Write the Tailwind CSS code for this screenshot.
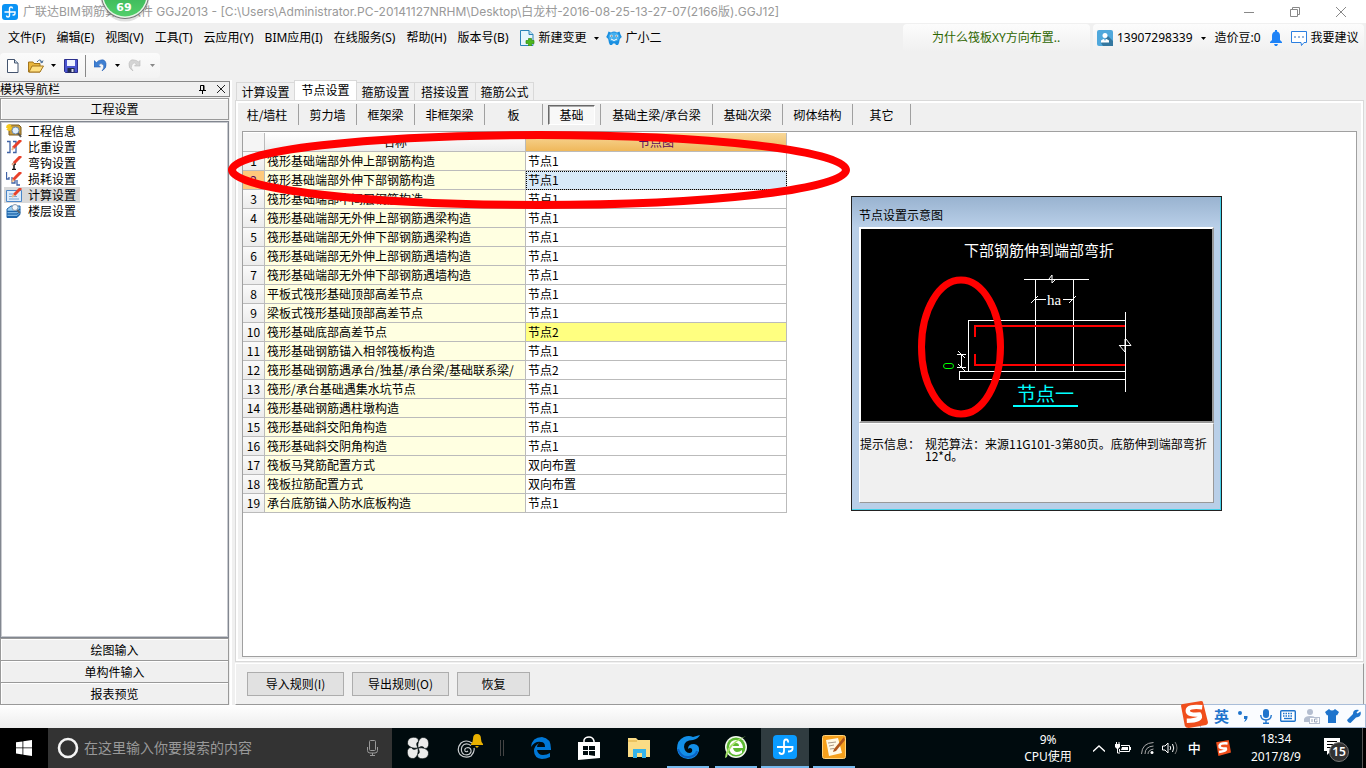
<!DOCTYPE html>
<html lang="zh-CN">
<head>
<meta charset="utf-8">
<meta name="viewport" content="width=device-width, initial-scale=1">
<title>广联达BIM钢筋算量软件 GGJ2013</title>
<script src="https://cdn.jsdelivr.net/npm/@tailwindcss/browser@4"></script>
</head>
<body class="relative flex h-screen min-h-[600px] flex-col overflow-hidden bg-[#f0f0f0] font-['Noto_Sans_CJK_SC',sans-serif] text-xs leading-[18px] text-black">

<!-- Title bar -->
<header class="flex h-[23px] shrink-0 items-center bg-white pl-0.5 font-['Inter','Noto_Sans_CJK_SC',sans-serif] text-[#999]">
  <svg class="size-4" viewBox="0 0 16 16"><rect width="16" height="16" rx="3" fill="#0a93f5"/><path d="M10.500 4.500Q10.500 3 9 3Q7.500 3 7.500 5V11Q7.500 13 6 13Q4.500 13 4.500 11.500M2.500 8H13V9.500Q13 11 11.500 11H10.500" fill="none" stroke="#fff" stroke-width="1.400"/></svg>
  <h1 class="ml-[5px] flex-1 truncate">广联达BIM钢筋算量软件 GGJ2013 - [C:\Users\Administrator.PC-20141127NRHM\Desktop\白龙村-2016-08-25-13-27-07(2166版).GGJ12]</h1>
  <div class="flex h-full items-center gap-9 pr-5">
    <button aria-label="最小化"><svg class="size-[10px]" viewBox="0 0 10 10"><path d="M0 5.500H10" stroke="#888"/></svg></button>
    <button aria-label="还原"><svg class="size-[10px]" viewBox="0 0 10 10" fill="none" stroke="#888"><path d="M.5 2.500H7.500V9.500H.5ZM2.500 2.500V.5H9.500V7.500H7.500"/></svg></button>
    <button aria-label="关闭"><svg class="size-[10px]" viewBox="0 0 10 10"><path d="M0 0L10 10M10 0L0 10" stroke="#888"/></svg></button>
  </div>
</header>

<!-- Menu bar -->
<div class="flex h-[30px] shrink-0 items-center font-['Noto_Sans','Noto_Sans_CJK_SC',sans-serif]">
  <nav class="flex gap-[11px] whitespace-nowrap pl-2">
    <button>文件(F)</button><button>编辑(E)</button><button>视图(V)</button><button>工具(T)</button><button>云应用(Y)</button><button>BIM应用(I)</button><button>在线服务(S)</button><button>帮助(H)</button><button>版本号(B)</button>
  </nav>
  <button class="ml-[11px] flex items-center whitespace-nowrap">
    <svg class="h-4 w-[15px]" viewBox="0 0 15 16"><path d="M.5.500H9L13 4.500V15.500H.5Z" fill="#e8f5fc" stroke="#2b83b8"/><path d="M9 .5V4.500H13" fill="#b8dcf0" stroke="#2b83b8"/><path d="M8.500 8.500H11.500V10.500H14V13.500H11.500V16H8.500V13.500H6V10.500H8.500Z" fill="#4cb81c" stroke="#358a10" stroke-width=".7"/></svg>
    <span class="ml-1">新建变更</span>
    <svg class="ml-[7px] h-[3px] w-[5px]" viewBox="0 0 5 3"><path d="M0 0H5L2.500 3Z"/></svg>
  </button>
  <button class="ml-[7px] flex items-center gap-1 whitespace-nowrap">
    <svg class="size-4" viewBox="0 0 16 16"><path d="M2.500 1.500L5 2.500Q8 .5 11 2.500L13.500 1.500L14.500 4.500L15.800 7L13.800 9L13 13L12 15H10L9 13.500H7L6 15H4L3 13L2.200 9L.2 7L1.500 4.500Z" fill="#1a8fe0"/><ellipse cx="8" cy="7" rx="5.500" ry="4.500" fill="#46b0ef"/><circle cx="5.500" cy="6" r="1.200" fill="#fff"/><circle cx="10.500" cy="6" r="1.200" fill="#fff"/><circle cx="5.700" cy="6" r=".6"/><circle cx="10.300" cy="6" r=".6"/><path d="M5 9Q8 12 11 9" fill="none" stroke="#fff"/></svg>
    广小二
  </button>
  <div class="flex-1"></div>
  <a href="#" class="mr-[3px] block h-7 w-[187px] shrink-0 rounded bg-linear-to-b from-[#fcfcfc] to-[#f0f0f0] pl-[29px] leading-[28px] text-[#2d6600]">为什么筏板XY方向布置..</a>
  <div class="mr-0.5 flex h-7 w-[271px] shrink-0 items-center whitespace-nowrap rounded bg-linear-to-b from-[#fcfcfc] to-[#f0f0f0] pl-1">
    <svg class="size-4" viewBox="0 0 16 16"><rect width="16" height="16" rx="2" fill="#4fa8dc"/><path d="M11 6L16 11V16H6L4 13Z" fill="#3478a0"/><circle cx="8" cy="5.500" r="2.500" fill="#fff"/><path d="M4 12.500V10.500Q8 7 12 10.500V12.500Z" fill="#fff"/><path d="M7 9H9L8 11Z" fill="#4fa8dc"/></svg>
    <button class="ml-1 flex items-center gap-2">13907298339<svg class="h-[3px] w-[5px]" viewBox="0 0 5 3"><path d="M0 0H5L2.500 3Z"/></svg></button>
    <span class="ml-[9px]">造价豆:0</span>
    <svg class="ml-[9px] h-4 w-3" viewBox="0 0 12 16" fill="#1e83f7"><path d="M5 0H7V1.500Q10 2 10 6V10L12 12V13H0V12L2 10V6Q2 2 5 1.500ZM4 14H8L7 16H5Z"/></svg>
    <svg class="ml-[9px] size-4" viewBox="0 0 16 16"><path d="M.5 1.500H15.500V12.500H13L10.500 15.500L10 12.500H.5Z" fill="#fff" stroke="#2b7fe0"/><path d="M3 7H5M7 7H9M11 7H13" stroke="#2b6fc0"/></svg>
    <button class="ml-1">我要建议</button>
  </div>
</div>

<!-- Toolbar -->
<div class="flex h-[27px] shrink-0">
  <div class="flex h-[25px] w-40 items-center rounded bg-linear-to-b from-[#fbfbfb] to-[#f3f3f3] pl-[7px]">
    <button aria-label="新建"><svg class="h-[14px] w-3" viewBox="0 0 12 14"><path d="M.5.500H7.500L11 4V13.500H.5Z" fill="#fff" stroke="#44546e"/><path d="M7.500.500V4H11" fill="#cde" stroke="#44546e"/></svg></button>
    <button class="ml-[9px]" aria-label="打开"><svg class="h-[14px] w-4" viewBox="0 0 16 14"><path d="M.5 13V3H5L6 4.500H12V13Z" fill="#e9b63d" stroke="#a3751c"/><path d="M1 13L4 7H15.500L12 13Z" fill="#ffdf80" stroke="#a3751c"/><path d="M9 3Q12-1 14 3M12 2.500L14 4L15 1.500" fill="none" stroke="#456a94"/></svg></button>
    <svg class="ml-[7px] h-[3px] w-[5px]" viewBox="0 0 5 3"><path d="M0 0H5L2.500 3Z"/></svg>
    <button class="ml-2" aria-label="保存"><svg class="size-[14px]" viewBox="0 0 14 14"><path d="M.5.500H13.500V13.500H1.500L.5 12.500Z" fill="#4a55d0" stroke="#2c2f8c"/><path d="M3 1H11V7H3Z" fill="#eef2ff"/><path d="M3.500 9H10.500V13.500H3.500Z" fill="#202a50"/><path d="M7.500 10H9.500V13H7.500Z" fill="#dde"/></svg></button>
    <span class="ml-[7px] h-[22px] w-px bg-[#888]"></span>
    <button class="ml-2" aria-label="撤销"><svg class="size-[13px]" viewBox="0 0 13 13"><path d="M0 1.500V8H6.500L4.500 6Q7 3.500 9 5.500T8 12Q13 9 12 4.500T7 1Q4.500 1 2.500 3.500Z" fill="#3e7fd2" stroke="#2c63b5" stroke-width=".6"/></svg></button>
    <svg class="ml-2 h-[3px] w-[5px]" viewBox="0 0 5 3"><path d="M0 0H5L2.500 3Z"/></svg>
    <button class="ml-2" aria-label="重做" disabled><svg class="size-[13px]" viewBox="0 0 13 13"><path d="M12 1.500V7H6.500L8.500 5Q6 2.500 4 5.500T5 12Q0 9 1 4.500T6 1Q8.500 1 10.500 3Z" fill="#d4d4d4" stroke="#bbb" stroke-width=".6"/></svg></button>
    <svg class="ml-[9px] h-[3px] w-[5px]" viewBox="0 0 5 3"><path d="M0 0H5L2.500 3Z" fill="#888"/></svg>
  </div>
</div>

<!-- Work area -->
<div class="flex min-h-0 flex-1">
  <!-- Module navigation -->
  <aside class="flex w-[230px] shrink-0 flex-col pt-px">
    <div class="flex h-4 items-center border border-l-0 border-[#888] pr-1 leading-[14px]">
      <h2 class="flex-1">模块导航栏</h2>
      <button aria-label="固定"><svg class="h-[9px] w-[7px]" viewBox="0 0 7 9"><path d="M1.500 5V.5H5V5M0 5.500H7M3.500 6V9M4.500 0V5" fill="none" stroke="#000"/></svg></button>
      <button class="ml-[11px]" aria-label="关闭导航栏"><svg class="size-2" viewBox="0 0 8 8"><path d="M0 0L8 8M8 0L0 8" stroke="#222"/></svg></button>
    </div>
    <button class="mr-px mt-px h-[22px] border border-[#999] shadow-[inset_1px_1px_0_#fff]">工程设置</button>
    <ul class="mr-px mt-px flex-1 border border-[#828790] bg-white pt-px pl-[3px] leading-4 outline-1 -outline-offset-2 outline-[#c8cacf]">
      <li><button class="flex h-4 items-center gap-1 px-0.5"><svg class="h-[14px] w-4" viewBox="0 0 16 14"><path d="M3 1H13L15 3V11H3Z" fill="#c79a3c" stroke="#7a5c1e"/><path d="M0 3L6 4M3 0V7M1 1L5 6M5 1L1 6" stroke="#f7c81c" stroke-width="1.500"/><circle cx="9.500" cy="6.500" r="3.500" fill="#e2f0fc" stroke="#6b8cb0"/><path d="M12 9L15 13" stroke="#555" stroke-width="2"/></svg><span class="px-0.5">工程信息</span></button></li>
      <li><button class="flex h-4 items-center gap-1 px-0.5"><svg class="h-[14px] w-4" viewBox="0 0 16 14"><path d="M1 1.500H4V12.500H1M7 1.500H10V12.500H7" fill="none" stroke="#3f62a5" stroke-width="1.300"/><path d="M15 0L7 8" stroke="#e8402a" stroke-width="3"/><path d="M7.500 7.500L6 10" stroke="#e9b98a" stroke-width="2"/></svg><span class="px-0.5">比重设置</span></button></li>
      <li><button class="flex h-4 items-center gap-1 px-0.5"><svg class="h-[14px] w-4" viewBox="0 0 16 14"><path d="M8 6V13M6 13.500H10M6 8H10" stroke="#111" stroke-width="1.500"/><path d="M15 0L8 7" stroke="#e8402a" stroke-width="3"/><path d="M8 7L6 9" stroke="#e9a98a" stroke-width="2"/></svg><span class="px-0.5">弯钩设置</span></button></li>
      <li><button class="flex h-4 items-center gap-1 px-0.5"><svg class="h-[14px] w-4" viewBox="0 0 16 14"><path d="M.5 0V7H3V5M6 5V11H9V8M11 8V13H14" fill="none" stroke="#3f62a5" stroke-width="1.300"/><path d="M15 0L7 8" stroke="#e8402a" stroke-width="3"/><path d="M7.500 7.500L6 10" stroke="#e9b98a" stroke-width="2"/></svg><span class="px-0.5">损耗设置</span></button></li>
      <li><button class="flex h-4 items-center gap-1 bg-[#d9d9d9] px-0.5"><svg class="h-[14px] w-4" viewBox="0 0 16 14"><path d="M.5 2.500H15.500V13.500H.5Z" fill="#dcecfb" stroke="#4a86c8"/><path d="M3 6H7M3 8.500H11M3 11H13" stroke="#7ba4d0"/><path d="M15 0L8 7" stroke="#e8402a" stroke-width="3"/><path d="M8 7L6 9" stroke="#e9b98a" stroke-width="2"/></svg><span class="px-0.5">计算设置</span></button></li>
      <li><button class="flex h-4 items-center gap-1 px-0.5"><svg class="h-[14px] w-4" viewBox="0 0 16 14"><path d="M1 5L5 2H14V10L11 13.500H1Z" fill="#9cd0f4" stroke="#1e66ac"/><path d="M1 7.500H11L14 5M1 10H11L14 7.500M1 12.500H11L14 10" fill="none" stroke="#1e66ac" stroke-width="1.300"/><circle cx="9" cy="3.500" r="3" fill="#f3f8fc" stroke="#8a9cae"/><path d="M11 6L14 9" stroke="#666" stroke-width="1.500"/></svg><span class="px-0.5">楼层设置</span></button></li>
    </ul>
    <div class="mr-px flex flex-col">
      <button class="h-[23px] border border-[#999] pt-px shadow-[inset_1px_1px_0_#fff]">绘图输入</button>
      <button class="h-[22px] border border-t-0 border-[#999] shadow-[inset_1px_1px_0_#fff]">单构件输入</button>
      <button class="h-[22px] border border-t-0 border-[#999] shadow-[inset_1px_1px_0_#fff]">报表预览</button>
    </div>
  </aside>
  <div class="w-[5px] shrink-0 border-l-2 border-white"></div>

  <!-- Settings -->
  <main class="flex min-w-0 flex-1 flex-col pr-0.5">
    <div class="flex h-5 shrink-0 items-end pl-px" role="tablist">
      <button role="tab" class="h-[18px] w-[58px] border border-r-0 border-b-0 border-[#d9d9d9]">计算设置</button>
      <button role="tab" aria-selected="true" class="h-5 w-[63px] border border-b-0 border-[#d9d9d9] bg-white pb-px">节点设置</button>
      <button role="tab" class="h-[18px] w-[58px] border-t border-r border-[#d9d9d9]">箍筋设置</button>
      <button role="tab" class="h-[18px] w-[61px] border-t border-r border-[#d9d9d9]">搭接设置</button>
      <button role="tab" class="h-[18px] w-[58px] border-t border-r border-[#d9d9d9]">箍筋公式</button>
    </div>
    <section class="flex min-h-0 flex-1 flex-col border border-[#d9d9d9] shadow-[inset_0_0_0_2px_#fff]">
      <div class="flex h-[30px] shrink-0 items-start pt-[3px] *:h-[21px] *:border-r *:border-[#a0a0a0]">
        <button class="w-[63px]">柱/墙柱</button><button class="w-[58px]">剪力墙</button><button class="w-[58px]">框架梁</button><button class="w-[70px]">非框架梁</button><button class="w-[58px]">板</button>
        <div class="w-[58px] px-[5px]"><button aria-pressed="true" class="mt-px h-5 w-full border border-t-[#696969] border-l-[#696969] border-r-white border-b-white bg-[#f8f8f8] shadow-[inset_1px_1px_0_#aaa]">基础</button></div>
        <button class="w-28">基础主梁/承台梁</button><button class="w-[70px]">基础次梁</button><button class="w-[70px]">砌体结构</button><button class="w-[58px]">其它</button>
      </div>
      <div class="mx-1.5 mb-1 min-h-0 flex-1 border border-[#a0a0a0] bg-white pt-px">
        <table class="w-[544px] table-fixed border-separate border-spacing-0 text-left [&_td]:h-[19px] [&_td]:overflow-hidden [&_td]:whitespace-nowrap [&_td]:border-r [&_td]:border-b [&_td]:border-[#bbb] [&_td]:p-0 [&_td]:pl-0.5 [&_th]:h-[19px] [&_th]:border-r [&_th]:border-b [&_th]:border-[#bbb] [&_th]:p-0 [&_th]:text-center [&_th]:font-normal [&_td:nth-child(2)]:bg-[#ffffe1] [&_tbody_th]:bg-linear-to-b [&_tbody_th]:from-[#fafafa] [&_tbody_th]:to-[#ececec]">
          <colgroup><col class="w-[22px]"><col class="w-[261px]"><col class="w-[261px]"></colgroup>
          <thead><tr><th class="bg-[#f5f5f5]"></th><th scope="col" class="bg-linear-to-b from-white to-[#ececec]">名称</th><th scope="col" class="bg-linear-to-b from-[#f8d898] to-[#efb85a] text-[#5a0a5a]">节点图</th></tr></thead>
          <tbody>
            <tr><th scope="row">1</th><td>筏形基础端部外伸上部钢筋构造</td><td>节点1</td></tr>
            <tr><th scope="row" class="bg-[#ffc97c]! bg-none! text-[#5a0a5a]">2</th><td>筏形基础端部外伸下部钢筋构造</td><td class="bg-[#d8e9f8] outline-1 -outline-offset-1 outline-dotted outline-black">节点1</td></tr>
            <tr><th scope="row">3</th><td>筏形基础端部中间层钢筋构造</td><td>节点1</td></tr>
            <tr><th scope="row">4</th><td>筏形基础端部无外伸上部钢筋遇梁构造</td><td>节点1</td></tr>
            <tr><th scope="row">5</th><td>筏形基础端部无外伸下部钢筋遇梁构造</td><td>节点1</td></tr>
            <tr><th scope="row">6</th><td>筏形基础端部无外伸上部钢筋遇墙构造</td><td>节点1</td></tr>
            <tr><th scope="row">7</th><td>筏形基础端部无外伸下部钢筋遇墙构造</td><td>节点1</td></tr>
            <tr><th scope="row">8</th><td>平板式筏形基础顶部高差节点</td><td>节点1</td></tr>
            <tr><th scope="row">9</th><td>梁板式筏形基础顶部高差节点</td><td>节点1</td></tr>
            <tr><th scope="row">10</th><td>筏形基础底部高差节点</td><td class="bg-[#ffff80]">节点2</td></tr>
            <tr><th scope="row">11</th><td>筏形基础钢筋锚入相邻筏板构造</td><td>节点1</td></tr>
            <tr><th scope="row">12</th><td>筏形基础钢筋遇承台/独基/承台梁/基础联系梁/</td><td>节点2</td></tr>
            <tr><th scope="row">13</th><td>筏形/承台基础遇集水坑节点</td><td>节点1</td></tr>
            <tr><th scope="row">14</th><td>筏形基础钢筋遇柱墩构造</td><td>节点1</td></tr>
            <tr><th scope="row">15</th><td>筏形基础斜交阳角构造</td><td>节点1</td></tr>
            <tr><th scope="row">16</th><td>筏形基础斜交阴角构造</td><td>节点1</td></tr>
            <tr><th scope="row">17</th><td>筏板马凳筋配置方式</td><td>双向布置</td></tr>
            <tr><th scope="row">18</th><td>筏板拉筋配置方式</td><td>双向布置</td></tr>
            <tr><th scope="row">19</th><td>承台底筋锚入防水底板构造</td><td>节点1</td></tr>
          </tbody>
        </table>
      </div>
    </section>
    <div class="mt-px flex h-[42px] shrink-0 items-start gap-2 border border-t-white border-l-white border-r-[#999] border-b-[#999] pt-2 pl-[11px] *:h-6 *:border *:border-[#adadad] *:bg-[#e1e1e1]">
      <button class="w-[97px]">导入规则(I)</button>
      <button class="w-[97px]">导出规则(O)</button>
      <button class="w-[73px]">恢复</button>
    </div>
  </main>
</div>

<!-- Status strip -->
<div class="h-[23px] shrink-0 bg-linear-to-b from-white to-[#ededed]"></div>

<!-- Taskbar -->
<footer class="flex h-10 shrink-0 bg-[#000b0e] font-['Noto_Sans','Noto_Sans_CJK_SC',sans-serif] text-white">
  <button class="flex w-12 items-center justify-center bg-black" aria-label="开始"><svg class="size-4" viewBox="0 0 16 16" fill="#fff"><path d="M0 2.300L6.500 1.400V7.500H0ZM7.300 1.300L16 0V7.500H7.300ZM0 8.300H6.500V14.500L0 13.600ZM7.300 8.300H16V16L7.300 14.700Z"/></svg></button>
  <label class="flex w-[344px] items-center bg-[#333] pr-[14px] pl-[9px]">
    <svg class="size-[22px]" viewBox="0 0 22 22"><circle cx="11" cy="11" r="9" fill="none" stroke="#f4f4f4" stroke-width="2.600"/></svg>
    <input type="text" aria-label="搜索" placeholder="在这里输入你要搜索的内容" class="ml-[5px] min-w-0 flex-1 bg-transparent text-sm text-white outline-none placeholder:text-[#999]">
    <svg class="h-4 w-[11px]" viewBox="0 0 11 16" fill="none" stroke="#999"><rect x="2.500" y=".5" width="6" height="10" rx="1"/><path d="M.5 7V10.500Q.5 13 3 13H8Q10.500 13 10.500 10.500V7M5.500 13V15.500M3 15.500H8"/></svg>
  </label>
  <div class="flex">
    <button class="flex w-[52px] items-center justify-center" aria-label="浏览器"><svg class="size-[22px]" viewBox="0 0 22 22" fill="#ececec"><g stroke="#000b0e" stroke-width=".6"><path d="M11 11Q3 12 .5 7Q0 1 6 .3Q11.500 0 11.500 4.500Q8 6 11 11Z"/><path d="M11 11Q10 3 15 .5Q21 0 21.700 6Q22 11.500 17.500 11.500Q16 8 11 11Z"/><path d="M11 11Q19 10 21.500 15Q22 21 16 21.700Q10.500 22 10.500 17.500Q14 16 11 11Z"/><path d="M11 11Q12 19 7 21.500Q1 22 .3 16Q0 10.500 4.500 10.500Q6 14 11 11Z"/></g></svg></button>
    <button class="flex w-[52px] items-center justify-center" aria-label="消息"><svg class="h-7 w-[26px]" viewBox="0 0 26 28"><g fill="none" stroke="#c8ccce" stroke-width="1.200"><path d="M15 9Q9 5 4 9Q-1 15 3 20.500Q8 25 14 22Q18 18 17 14"/><path d="M14 11.500Q8 8 5 12.500Q3 18 7 20.500Q12 22 14 18Q14.500 14 11 13.500Q7 14 8 17Q9 18.500 11 17"/></g><path d="M14 10Q16 8 16 5Q16 0 20 0T24 5Q24 8 26 10V11H14ZM18 12H22L20 14Z" fill="#e8b100"/></svg></button>
    <div class="mt-3 mr-[13px] ml-1 h-4 w-1 border-x border-[#444]"></div>
    <button class="flex w-[48px] items-center justify-center" aria-label="Edge"><svg class="size-[22px]" viewBox="0 0 22 22"><path d="M1 10Q2 0 12 0Q21 1 21 12V13H7Q8 18 13 18Q17 18 20 16V20Q16 22 12 22Q4 21 4 14Q4 9 9 6Q7 8 7 10H15Q15 5 11 5Q5 4 1 10Z" fill="#0078d7"/></svg></button>
    <button class="flex w-[48px] items-center justify-center" aria-label="应用商店"><svg class="h-6 w-[22px]" viewBox="0 0 22 24"><path d="M0 6H22V22L0 24Z" fill="#fff"/><path d="M6 7V4Q7 1 11 1T16 5V7" fill="none" stroke="#fff" stroke-width="1.500"/><path d="M5 10H10V14H5ZM11 10H17V14H11ZM5 15H10V19H5ZM11 15H17V20L11 19Z" fill="#000b0e"/></svg></button>
    <button class="flex w-[52px] items-center justify-center" aria-label="文件资源管理器"><svg class="h-5 w-[22px]" viewBox="0 0 22 20"><path d="M0 0H8L10 2H22V19H0Z" fill="#fbdc85"/><path d="M0 3H9" stroke="#dba93a"/><path d="M5 11H18V20H14V15H9V20H5Z" fill="#35b3ea"/></svg></button>
    <button class="mx-0.5 flex w-[42px] items-center justify-center border-b-2 border-[#76b9ed]" aria-label="广联达"><svg class="size-6" viewBox="0 0 24 24"><path d="M24 0Q22 4 17 5Q8 5 8 12Q9 18 14 18Q17 17 16 14Q14 12 12 14Q12 9 18 9Q24 10 23 16Q20 24 12 24Q2 23 1 14Q1 5 8 2Q13 0 17 2Z" fill="#128fe8"/><path d="M2 14Q5 23 13 22Q20 21 21 16" stroke="#0b62c4" stroke-width="2" fill="none"/></svg></button>
    <button class="mx-1 flex w-[42px] items-center justify-center border-b-2 border-[#76b9ed]" aria-label="360浏览器"><svg class="size-6" viewBox="0 0 24 24"><circle cx="12" cy="12" r="11" fill="#f2f8ee"/><circle cx="12" cy="12" r="9.500" fill="#5cb832"/><path d="M5 12Q6 5 12 5T19 13H9Q10 17 13 17Q16 17 18 15V18Q15 20 12 20Q5 19 5 12ZM9 11H15Q15 8 12 8T9 11Z" fill="#fff"/><path d="M1 23Q2 8 22 1Q5 10 3 22Z" fill="#a6e36c"/></svg></button>
    <button class="flex w-12 items-center justify-center border-b-2 border-[#76b9ed] bg-[#303c40]" aria-label="GGJ2013"><svg class="size-6" viewBox="0 0 24 24"><rect width="24" height="24" rx="4" fill="#0a9bff"/><path d="M15 7.500Q15.500 4.500 13 4.500Q11 4.500 11 7.500V16Q11 19 8.500 19Q6.500 19 6.500 17M4 12H19.500V14Q19 16.500 15 16.500" fill="none" stroke="#fff" stroke-width="1.800"/></svg></button>
    <button class="mx-1 flex w-[42px] items-center justify-center border-b-2 border-[#76b9ed]" aria-label="便签"><svg class="size-6" viewBox="0 0 24 24"><rect x=".5" y=".5" width="23" height="23" rx="2" fill="#f5a01c" stroke="#ffd27a"/><path d="M4 5L16 3L20 18L7 21Z" fill="#fff8e4"/><path d="M6 8L14 7M7 11L12 10M8 14L12 13.500" stroke="#a98"/><path d="M22 2L12 14L11 17L14 16L23 5Z" fill="#b0561c"/></svg></button>
  </div>
  <div class="flex-1"></div>
  <div class="mr-[21px] flex flex-col items-center pt-[3px] leading-[17px]"><span>9%</span><span>CPU使用</span></div>
  <div class="flex items-center">
    <svg class="h-[7px] w-3" viewBox="0 0 12 7"><path d="M0 6.500L6 1L12 6.500" fill="none" stroke="#fff" stroke-width="1.300"/></svg>
    <svg class="ml-[10px] h-3 w-4" viewBox="0 0 16 12"><path d="M6 3.500H14.500V9.500H4.500V7" fill="none" stroke="#fff"/><path d="M7 5H13V8H6ZM15 5H16V8H15ZM0 2H5V5L3 7H2L0 5ZM1 0H2V2H1ZM3.500 0H4.500V2H3.500Z" fill="#fff"/><path d="M2.500 7V11H5" fill="none" stroke="#fff"/></svg>
    <svg class="ml-[10px] h-3 w-[13px]" viewBox="0 0 13 12"><g fill="none" stroke="#aaa"><path d="M.5 12Q1 1 12.500.5M4 12Q4 4.500 12.500 4M7 12Q7 8 12.500 7"/></g><circle cx="11" cy="10.500" r="1.500" fill="#fff"/></svg>
    <svg class="ml-2 h-[14px] w-[17px]" viewBox="0 0 17 14" fill="none" stroke="#fff"><path d="M.5 5H3L6 2V12L3 9H.5ZM8 5Q9.500 7 8 9M10.500 3Q13 7 10.500 11"/><path d="M13 1Q17 7 13 13" stroke="#777"/></svg>
    <span class="ml-[9px] text-[13px] font-medium">中</span>
    <svg class="ml-[14px] size-4" viewBox="0 0 28 28"><path d="M2 4L24 0L28 22L6 28Z" fill="#f04e1c"/><path d="M22 6Q9 5 8 10T19 15Q21 19 7 21" fill="none" stroke="#fff" stroke-width="4.500"/></svg>
  </div>
  <div class="ml-5 flex flex-col items-center pt-0.5 leading-[18px]"><span>18:34</span><span>2017/8/9</span></div>
  <button class="ml-[22px] w-[39px]" aria-label="通知"><svg class="h-[27px] w-7" viewBox="0 0 28 27"><path d="M1 3H17V16H8L4 20V16H1Z" fill="#fff"/><path d="M4 6.500H14M4 9.500H14M4 12.500H10" stroke="#000"/><circle cx="16" cy="17" r="9.500" fill="#333" stroke="#777"/><text x="16" y="21" text-anchor="middle" fill="#fff" font-size="12" font-weight="600" font-family="Noto Sans">15</text></svg></button>
  <div class="w-1 border-l border-[#555] bg-black"></div>
</footer>

<!-- Floating speed ball -->
<div class="absolute top-0 left-[97px] h-6 w-14 overflow-hidden">
  <svg class="h-6 w-14" viewBox="0 0 56 24"><defs><linearGradient id="g" x1="0" y1="0" x2="0" y2="1"><stop offset=".5" stop-color="#3cb85a"/><stop offset="1" stop-color="#52cf6a"/></linearGradient></defs><circle cx="28" cy="-3" r="24.500" fill="#000" opacity=".12"/><circle cx="28" cy="-5" r="24" fill="#777"/><circle cx="28" cy="-5" r="23" fill="#e8f5e8"/><circle cx="28" cy="-5" r="21.500" fill="url(#g)"/><text x="27" y="11" text-anchor="middle" font-family="DejaVu Sans" font-weight="700" font-size="11" fill="#fff">69</text></svg>
</div>

<!-- Node diagram window -->
<section class="absolute top-[196px] left-[851px] w-[371px] border border-[#222] bg-[#b9cfe8] pb-[7px] shadow-[inset_-1px_-1px_0_#45d0e8]">
  <h2 class="mr-px h-[30px] bg-linear-to-b from-[#99b3d0] to-[#b9cfe8] pt-[10px] pl-[7px] font-['Noto_Sans','Noto_Sans_CJK_SC',sans-serif]">节点设置示意图</h2>
  <div class="mx-[7px] border-2 border-t-white border-l-white border-r-[#999] border-b-[#999] bg-black">
    <svg class="block h-[192px] w-full" viewBox="861 229 351 192" preserveAspectRatio="xMidYMid meet">
      <text x="964" y="256" font-size="15" fill="#fff" font-family="Noto Sans CJK SC, sans-serif">下部钢筋伸到端部弯折</text>
      <g fill="none" stroke="#fff" shape-rendering="crispEdges"><path d="M1024 279.500H1089M1035.500 279V371M1073.500 279V371M968.500 371V320.500H1126M959 371.500H1126M959 379.500H1126M959.500 371V380M1125.500 312V392M1035 299.500H1046M1063 299.500H1074M957 354.500H966M957 367.500H966M961.500 354V368"/></g>
      <g fill="none" stroke="#fff"><path d="M1049 279L1052 275V283L1056 279M1031 303L1038 296M1069 303L1076 296M1119 345.500H1131L1126 339M1119 345L1125 352V339M958 351L965 358M958 364L965 371"/></g>
      <path d="M1125 326H975V337M975 354V365H1125" fill="none" stroke="#f00" stroke-width="2" shape-rendering="crispEdges"/>
      <text x="1054" y="305" text-anchor="middle" font-size="15" fill="#fff" font-family="Liberation Serif">ha</text>
      <rect x="943.500" y="363.500" width="10" height="5" rx="2.500" fill="none" stroke="#0f0"/>
      <text x="1017" y="401" font-size="19" fill="#0ff" font-family="Noto Sans CJK SC, sans-serif">节点一</text>
      <path d="M1013 406H1078" stroke="#0ff" stroke-width="2"/>
      <ellipse cx="961" cy="347" rx="39.500" ry="67" fill="none" stroke="#f00" stroke-width="7"/>
    </svg>
  </div>
  <div class="mx-[7px] flex h-[80px] border border-t-white border-l-white border-r-[#999] border-b-[#999] bg-[#f0f0f0] pt-[14px] leading-3">
    <span class="w-[65px] shrink-0">提示信息：</span>
    <p class="flex-1">规范算法：来源11G101-3第80页。底筋伸到端部弯折12*d。</p>
  </div>
</section>

<!-- Red mark over the table -->
<svg class="pointer-events-none absolute top-[130px] left-[227px] h-20 w-[624px]" viewBox="0 0 624 80"><ellipse cx="312" cy="40" rx="307" ry="35" fill="none" stroke="#f00" stroke-width="8"/></svg>

<!-- Input method bar -->
<div class="absolute right-0 bottom-10 flex h-[27px] items-end">
  <svg class="relative z-10 -mr-2 size-[27px]" viewBox="0 0 28 28"><path d="M0 5Q0 3 2 3L21 0Q23 0 23 2L28 22Q28 24 26 25L8 28Q5 28 4 26Z" fill="#f04e1c"/><path d="M22 6.500Q7 5 7 10T19 14Q23 20 6 20.500" fill="none" stroke="#fff" stroke-width="4.500"/></svg>
  <div class="flex h-6 items-center border border-[#a9bdd8] bg-[#fafcff] pr-1 pl-[13px] text-[#1f74cc]">
    <button class="text-[15px] font-bold leading-5">英</button>
    <svg class="ml-[9px] h-3 w-[10px]" viewBox="0 0 10 12" fill="#1f74cc"><circle cx="2" cy="3" r="2"/><path d="M6 6H9.500Q10 10 6 12L7.500 9H6Z"/></svg>
    <svg class="ml-3 h-[15px] w-3" viewBox="0 0 12 15"><rect x="3" width="6" height="9" rx="3" fill="#1f74cc"/><path d="M.7 6Q1 11 6 11T11.300 6M6 11V14M3 14.300H9" fill="none" stroke="#1f74cc" stroke-width="1.400"/></svg>
    <svg class="ml-2 h-3 w-4" viewBox="0 0 16 12"><rect x=".7" y=".7" width="14.600" height="10.600" rx="1" fill="#fff" stroke="#1f74cc" stroke-width="1.400"/><path d="M3 3.500H13M3 6H13" stroke="#1f74cc" stroke-width="1.400" stroke-dasharray="1.500 1"/><path d="M4 8.500H12" stroke="#1f74cc" stroke-width="1.400"/></svg>
    <svg class="ml-2 h-[15px] w-4" viewBox="0 0 16 15"><circle cx="6" cy="3" r="3" fill="#b4bed0"/><path d="M0 13V10Q1 7 6 7T11 9V13Z" fill="#b4bed0"/><rect x="5.500" y="8.500" width="10" height="6" fill="#fff" stroke="#b4bed0"/><path d="M8 10V13M10.500 10H13.500M10.500 10V13H13V11.500" fill="none" stroke="#98a4ba"/></svg>
    <svg class="ml-[5px] h-[14px] w-[14px]" viewBox="0 0 14 14"><path d="M4 0Q7 3 10 0L14 3L12 6.500L11 6V14H3V6L2 6.500L0 3Z" fill="#1f74cc"/></svg>
    <svg class="ml-2 size-[14px]" viewBox="0 0 14 14"><path d="M12 1L9.500 3.500L10.500 4.500L13.500 2.500Q15 8 9 8.500L3.500 14Q1 14 0 11L6 5Q6 0 12 1Z" fill="#1f74cc"/></svg>
  </div>
</div>
</body>
</html>
